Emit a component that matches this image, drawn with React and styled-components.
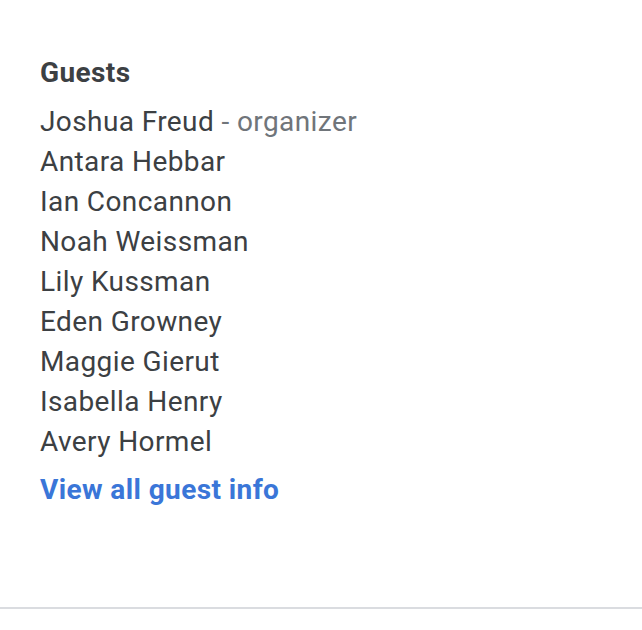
import styled, { createGlobalStyle } from 'styled-components';

const guests = [
  { name: 'Joshua Freud', role: 'organizer' },
  { name: 'Antara Hebbar' },
  { name: 'Ian Concannon' },
  { name: 'Noah Weissman' },
  { name: 'Lily Kussman' },
  { name: 'Eden Growney' },
  { name: 'Maggie Gierut' },
  { name: 'Isabella Henry' },
  { name: 'Avery Hormel' },
];

const GlobalStyle = createGlobalStyle`
  body {
    margin: 0;
    background: #fff;
    font-family: Roboto, "Noto Sans", Arial, sans-serif;
  }
`;

const App = () => {
  return (
    <>
      <GlobalStyle />
      <Page>
        <Section>
          <Heading>Guests</Heading>
          <List>
            {guests.map((g) => (
              <Guest key={g.name}>
                {g.name}
                {g.role && <Role> - {g.role}</Role>}
              </Guest>
            ))}
          </List>
          <Link href="#">View all guest info</Link>
        </Section>
        <Divider />
      </Page>
    </>
  );
};

const Page = styled.div`
  width: 642px;
  height: 630px;
  overflow: hidden;
  display: flex;
  flex-direction: column;
`;

const Section = styled.div`
  padding: 57px 40px 0;
  height: 550px;
  display: flex;
  flex-direction: column;
  align-items: flex-start;
  letter-spacing: 0.4px;
`;

const Heading = styled.h3`
  margin: 0 0 13px;
  font-size: 28px;
  line-height: 32px;
  font-weight: 700;
  color: #3c4043;
`;

const List = styled.ul`
  list-style: none;
  margin: 0;
  padding: 0;
`;

const Guest = styled.li`
  font-size: 28px;
  line-height: 40px;
  color: #3c4043;
`;

const Role = styled.span`
  color: #70757a;
`;

const Link = styled.a`
  margin-top: 8px;
  font-size: 28px;
  line-height: 40px;
  font-weight: 700;
  color: #3a76d8;
  text-decoration: none;
`;

const Divider = styled.hr`
  margin: 0;
  border: none;
  height: 2px;
  background: #dadce0;
`;

export default App;
